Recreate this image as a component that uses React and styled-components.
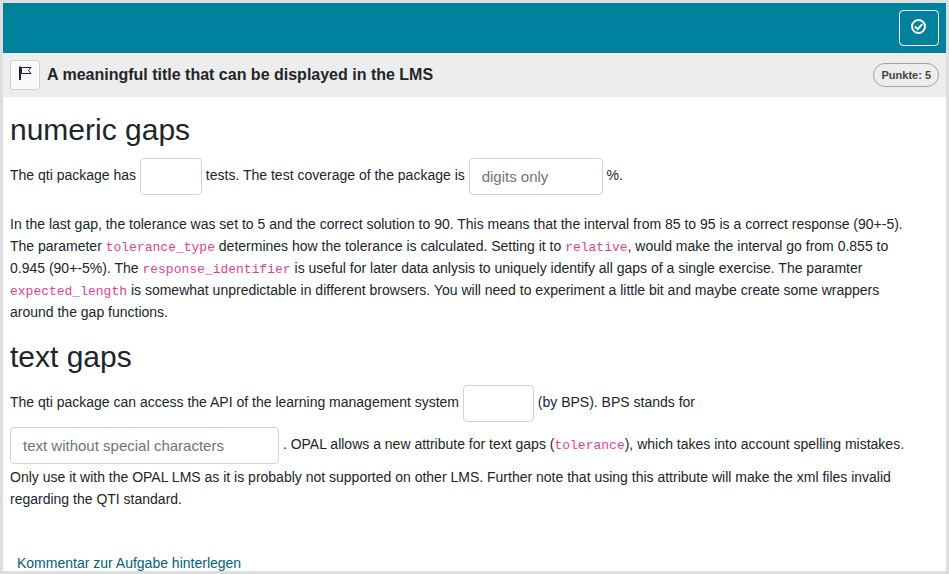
import React from "react";
import styled, { createGlobalStyle } from "styled-components";

const GlobalStyle = createGlobalStyle`
  *, *::before, *::after { box-sizing: border-box; }
  body {
    margin: 0;
    background: #fff;
    color: #212529;
    font-family: "Liberation Sans", Arial, sans-serif;
    font-size: 14px;
    line-height: 22px;
  }
`;

const Frame = styled.div`
  display: flex;
  flex-direction: column;
  min-height: 100vh;
  border: 3px solid #dedede;
`;

const TopBar = styled.header`
  display: flex;
  justify-content: flex-end;
  padding: 7px;
  background: #00829f;
`;

const SubmitButton = styled.button`
  display: flex;
  justify-content: center;
  width: 40px;
  height: 36px;
  padding: 8px 0 0;
  border: 1px solid #fff;
  border-radius: 4px;
  background: transparent;
  color: #fff;
  cursor: pointer;
`;

const TitleBar = styled.div`
  display: flex;
  align-items: center;
  gap: 7px;
  padding: 7px;
  background: #ededed;
`;

const FlagButton = styled.button`
  display: flex;
  justify-content: center;
  width: 30px;
  height: 30px;
  padding: 5px 0 0;
  border: 1px solid #ced0d2;
  border-radius: 3px;
  background: #f8f9fa;
  color: #212529;
  cursor: pointer;
`;

const Title = styled.h1`
  flex: 1;
  margin: 0;
  font-size: 16px;
  line-height: 22px;
`;

const Points = styled.span`
  padding: 0 7px;
  border: 1px solid #a3a3a3;
  border-radius: 12px;
  color: #444;
  font-size: 11px;
  font-weight: bold;
  line-height: 22px;
`;

const Content = styled.main`
  flex: 1;
  padding: 15px 32px 0 7px;
`;

const Heading = styled.h2`
  margin: 0 0 7px;
  font-size: 30px;
  font-weight: 400;
  line-height: 36px;
`;

const Paragraph = styled.p`
  margin: 0 0 16px;
`;

const Gap = styled.input`
  width: ${(p) => p.$width}px;
  height: 37px;
  margin: 3px 0 2px;
  padding: 0 12px;
  border: 1px solid #ced4da;
  border-radius: 4px;
  background: #fff;
  color: #495057;
  font-family: inherit;
  font-size: 15px;
  vertical-align: middle;

  &::placeholder {
    color: #6c757d;
    opacity: 1;
  }
`;

const Code = styled.code`
  color: #e83e8c;
  font-family: "Liberation Mono", monospace;
  font-size: 13px;
  line-height: 1;
`;

const Footer = styled.footer`
  padding: 0 14px;
  line-height: 16px;
`;

const CommentLink = styled.a`
  color: #006278;
  text-decoration: none;
`;

function FlagIcon() {
  return (
    <svg width="14" height="14" viewBox="0 0 14 14" fill="none" aria-hidden="true">
      <path d="M2 0.5V14" stroke="currentColor" strokeWidth="2" />
      <path d="M3.5 1.5H13L10.5 4.5L13 7.5H3.5Z" stroke="currentColor" strokeWidth="1" />
    </svg>
  );
}

function CheckIcon() {
  return (
    <svg width="16" height="16" viewBox="0 0 16 16" fill="none" aria-hidden="true">
      <circle cx="7.5" cy="7.5" r="6.5" stroke="currentColor" strokeWidth="2" />
      <path d="M4 7.5L6.7 10.2L11.2 5.2" stroke="currentColor" strokeWidth="2" />
    </svg>
  );
}

export default function App() {
  return (
    <>
      <GlobalStyle />
      <Frame>
        <TopBar>
          <SubmitButton type="button" aria-label="Abgeben">
            <CheckIcon />
          </SubmitButton>
        </TopBar>
        <TitleBar>
          <FlagButton type="button" aria-label="Markieren">
            <FlagIcon />
          </FlagButton>
          <Title>A meaningful title that can be displayed in the LMS</Title>
          <Points>Punkte: 5</Points>
        </TitleBar>
        <Content>
          <Heading>numeric gaps</Heading>
          <Paragraph>
            The qti package has <Gap $width={62} aria-label="Number of tests" /> tests. The test
            coverage of the package is{" "}
            <Gap $width={134} placeholder="digits only" aria-label="Test coverage" /> %.
          </Paragraph>
          <Paragraph>
            In the last gap, the tolerance was set to 5 and the correct solution to 90. This means
            that the interval from 85 to 95 is a correct response (90+-5). The parameter{" "}
            <Code>tolerance_type</Code> determines how the tolerance is calculated. Setting it to{" "}
            <Code>relative</Code>, would make the interval go from 0.855 to 0.945 (90+-5%). The{" "}
            <Code>response_identifier</Code> is useful for later data anlysis to uniquely identify
            all gaps of a single exercise. The paramter <Code>expected_length</Code> is somewhat
            unpredictable in different browsers. You will need to experiment a little bit and maybe
            create some wrappers around the gap functions.
          </Paragraph>
          <Heading>text gaps</Heading>
          <Paragraph>
            The qti package can access the API of the learning management system{" "}
            <Gap $width={71} aria-label="System name" /> (by BPS). BPS stands for{" "}
            <Gap
              $width={269}
              placeholder="text without special characters"
              aria-label="Meaning of BPS"
            />{" "}
            . OPAL allows a new attribute for text gaps (<Code>tolerance</Code>), which takes into
            account spelling mistakes. Only use it with the OPAL LMS as it is probably not supported
            on other LMS. Further note that using this attribute will make the xml files invalid
            regarding the QTI standard.
          </Paragraph>
        </Content>
        <Footer>
          <CommentLink href="#kommentar">Kommentar zur Aufgabe hinterlegen</CommentLink>
        </Footer>
      </Frame>
    </>
  );
}
